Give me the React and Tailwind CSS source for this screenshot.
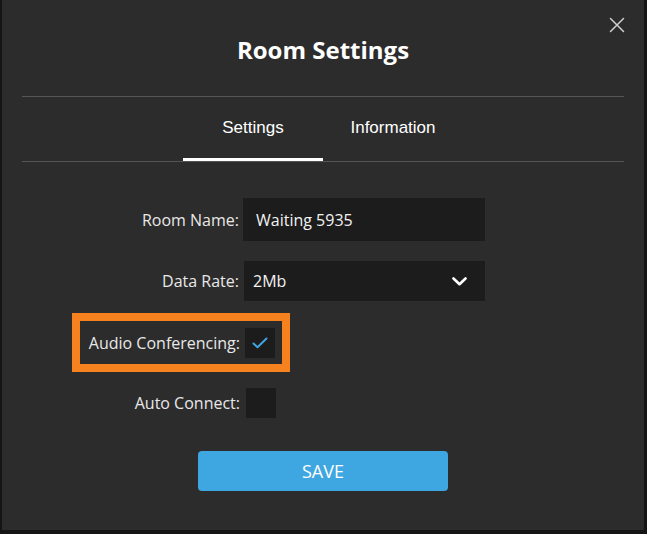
import React from "react";

const sans = { fontFamily: '"Open Sans", "Noto Sans", sans-serif' };

export default function App() {
  return (
    <div className="w-[647px] h-[534px] bg-[#151515] overflow-hidden">
      <div
        className="relative ml-[2px] w-[642px] h-[530px] bg-[#2c2c2c] flex flex-col"
        style={sans}
      >
        {/* close */}
        <button className="absolute left-[606px] top-[16px] w-[18px] h-[18px] flex items-center justify-center">
          <svg width="16" height="16" viewBox="0 0 16 16" fill="none" stroke="#cfcfcf" strokeWidth="1.5" strokeLinecap="round">
            <path d="M1.5 1.5 L14.5 14.5 M14.5 1.5 L1.5 14.5" />
          </svg>
        </button>

        {/* title */}
        <div className="h-[96px] pt-[34px] flex justify-center">
          <h1 className="text-[24px] leading-[32px] font-bold text-white font-['Open_Sans',sans-serif]">
            Room Settings
          </h1>
        </div>
        <div className="mx-[20px] h-px bg-[#555555]" />

        {/* tabs */}
        <div className="flex justify-center h-[64px] font-['Liberation_Sans',Arial,sans-serif] text-[17px] text-white">
          <div className="relative w-[140px] flex items-center justify-center pb-[2px]">
            Settings
            <div className="absolute left-0 right-0 bottom-0 h-[3px] bg-white" />
          </div>
          <div className="w-[140px] flex items-center justify-center pb-[2px]">
            Information
          </div>
        </div>
        <div className="mx-[20px] h-px bg-[#555555]" />

        {/* form */}
        <div className="mt-[36px] flex flex-col text-[16px] text-[#e8e8e8]">
          <div className="flex items-center h-[43px]">
            <label className="w-[237px] text-right">Room Name:</label>
            <div className="ml-[4px] w-[242px] h-[43px] bg-[#1c1c1c] flex items-center pl-[13px] text-[#f2f2f2]">
              Waiting 5935
            </div>
          </div>

          <div className="flex items-center h-[40px] mt-[20px]">
            <label className="w-[237px] text-right">Data Rate:</label>
            <div className="ml-[5px] w-[241px] h-[40px] bg-[#1c1c1c] flex items-center justify-between pl-[9px] pr-[18px] text-[#f2f2f2]">
              <span>2Mb</span>
              <svg width="15" height="9" viewBox="0 0 15 9" fill="none" stroke="#ffffff" strokeWidth="2.6" strokeLinecap="round" strokeLinejoin="round">
                <path d="M1.5 1.5 L7.5 7.2 L13.5 1.5" />
              </svg>
            </div>
          </div>

          <div className="relative flex items-center h-[30px] mt-[27px]">
            <label className="w-[238px] text-right">Audio Conferencing:</label>
            <div className="ml-[5px] w-[30px] h-[30px] bg-[#1c1c1c] flex items-center justify-center">
              <svg width="16" height="12" viewBox="0 0 16 12" fill="none" stroke="#3ea5de" strokeWidth="2" strokeLinecap="round" strokeLinejoin="round">
                <path d="M1.5 6.5 L5.5 10.3 L14.5 1.5" />
              </svg>
            </div>
            <div className="absolute left-[70px] top-[-15px] w-[218px] h-[59px] border-[8px] border-[#f6821f] pointer-events-none" />
          </div>

          <div className="flex items-center h-[30px] mt-[30px]">
            <label className="w-[238px] text-right">Auto Connect:</label>
            <div className="ml-[6px] w-[30px] h-[30px] bg-[#1c1c1c]" />
          </div>

          <div className="flex justify-center mt-[33px]">
            <button className="w-[250px] h-[40px] rounded-[4px] bg-[#3ea6e0] text-white text-[18px] flex items-center justify-center">
              SAVE
            </button>
          </div>
        </div>
      </div>
    </div>
  );
}
